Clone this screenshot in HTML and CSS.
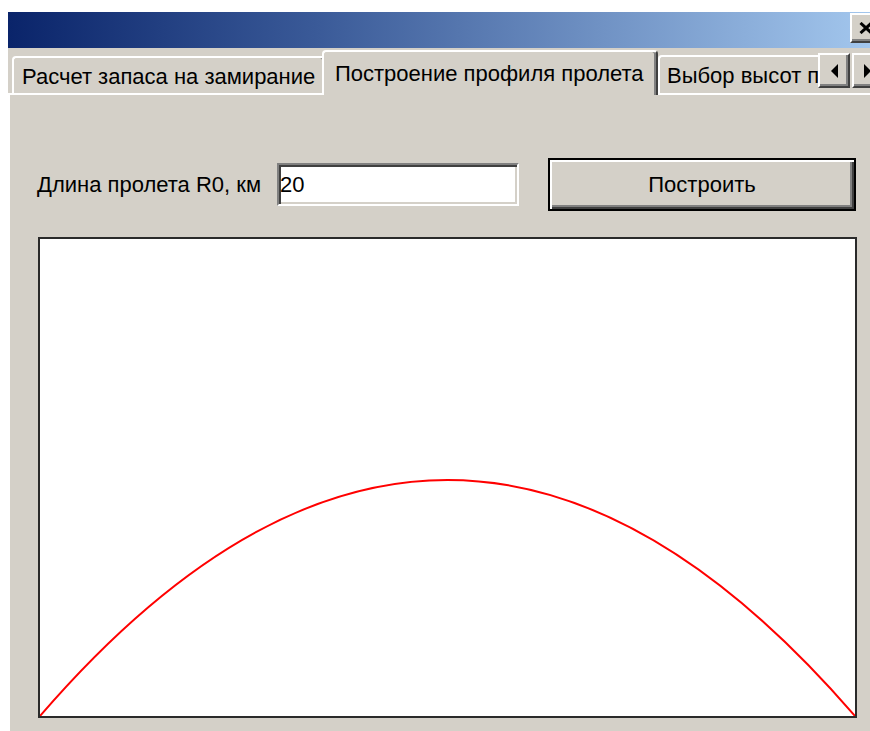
FILE: index.html
```html
<!DOCTYPE html>
<html lang="ru">
<head>
<meta charset="utf-8">
<title>Профиль пролета</title>
<link rel="stylesheet" href="styles.css">
</head>
<body>
<div class="window">
  <div class="titlebar">
    <button class="close-btn" type="button" aria-label="Закрыть">
      <svg width="14" height="12" viewBox="0 0 14 12"><path d="M1.5 1 L12.5 11 M12.5 1 L1.5 11" stroke="#000" stroke-width="3" fill="none"/></svg>
    </button>
  </div>
  <div class="tabstrip">
    <div class="tab tab-first">Расчет запаса на замирание</div>
    <div class="tab tab-active">Построение профиля пролета</div>
    <div class="tab tab-clipped">Выбор высот п</div>
    <div class="scroll-btns">
      <button class="scroll-btn" type="button" aria-label="Назад">
        <svg width="8" height="14" viewBox="0 0 8 14"><path d="M8 0 L1 7 L8 14 Z" fill="#000"/></svg>
      </button>
      <button class="scroll-btn" type="button" aria-label="Вперед">
        <svg width="8" height="14" viewBox="0 0 8 14"><path d="M0 0 L7 7 L0 14 Z" fill="#000"/></svg>
      </button>
    </div>
  </div>
  <div class="panel">
    <div class="form-row">
      <label class="field-label" for="r0">Длина пролета R0, км</label>
      <input class="field-input" id="r0" type="text" value="20">
      <button class="push-btn" type="button">Построить</button>
    </div>
    <div class="plot">
      <svg class="plot-svg" width="815" height="477" viewBox="0 0 815 477">
        <path d="M0 477 Q407.5 5 815 477" stroke="#ff0000" stroke-width="2" fill="none"/>
      </svg>
    </div>
  </div>
</div>
</body>
</html>
```

FILE: styles.css
```css
html, body {
  margin: 0;
  padding: 0;
}

body {
  width: 870px;
  height: 731px;
  overflow: hidden;
  background: #ffffff;
  font-family: "Liberation Sans", Arial, sans-serif;
  font-size: 22px;
  color: #000;
}

.window {
  margin: 12px 0 0 8px;
  width: 880px;
  height: 719px;
  background: #d4d0c8;
  display: flex;
  flex-direction: column;
}

/* caption bar */
.titlebar {
  height: 36px;
  flex: 0 0 36px;
  background: linear-gradient(to right, #0a246a 0%, #3a5a98 35%, #a6caf0 100%);
  display: flex;
  align-items: flex-start;
  justify-content: flex-end;
  padding: 1px 6px 0 0;
  box-sizing: border-box;
}

.close-btn {
  width: 32px;
  height: 30px;
  padding: 0;
  margin: 0;
  background: #d4d0c8;
  border: 2px solid;
  border-color: #fff #404040 #404040 #fff;
  box-shadow: inset -2px -2px #808080;
  display: flex;
  align-items: center;
  justify-content: center;
  box-sizing: border-box;
}

/* tabs */
.tabstrip {
  height: 45px;
  flex: 0 0 45px;
  display: flex;
  align-items: flex-end;
  padding-left: 4px;
  box-sizing: border-box;
}

.tab {
  box-sizing: border-box;
  background: #d4d0c8;
  border-top: 2px solid #fff;
  border-left: 2px solid #fff;
  border-right: 2px solid #404040;
  box-shadow: inset -2px 0 #808080;
  border-radius: 4px 4px 0 0;
  display: flex;
  align-items: center;
  white-space: nowrap;
  padding-top: 2px;
}

.tab-first {
  width: 314px;
  height: 37px;
  padding-left: 8px;
}

.tab-active {
  position: relative;
  z-index: 1;
  width: 336px;
  height: 45px;
  margin-left: -4px;
  margin-bottom: -2px;
  padding-left: 11px;
  padding-bottom: 2px;
}

.tab-clipped {
  width: 160px;
  height: 38px;
  padding-left: 7px;
  overflow: hidden;
  border-right: 0;
  box-shadow: none;
  border-top-right-radius: 0;
}

.scroll-btns {
  align-self: flex-start;
  margin-top: 5px;
  display: flex;
  gap: 2px;
}

.scroll-btn {
  width: 32px;
  height: 35px;
  padding: 0;
  margin: 0;
  background: #d4d0c8;
  border: 2px solid;
  border-color: #fff #404040 #404040 #fff;
  box-shadow: inset -2px -2px #808080;
  box-sizing: border-box;
  display: flex;
  align-items: center;
  justify-content: center;
}

/* page body */
.panel {
  flex: 1;
  border-top: 2px solid #fff;
  border-left: 2px solid #fff;
  padding: 63px 0 0 0;
}

.form-row {
  display: grid;
  grid-template-columns: 240px 271px 308px;
  align-items: center;
  height: 53px;
  padding-left: 27px;
}

.field-label {
  white-space: nowrap;
  padding-top: 1px;
}

.field-input {
  box-sizing: border-box;
  width: 242px;
  height: 43px;
  margin: 0;
  padding: 0 0 0 1px;
  font: inherit;
  color: #000;
  background: #fff;
  border: 2px solid;
  border-color: #808080 #fff #fff #808080;
  box-shadow: inset 2px 2px #404040, inset -2px -2px #d4d0c8;
  outline: none;
}

.push-btn {
  box-sizing: border-box;
  width: 308px;
  height: 53px;
  margin: 0;
  padding: 0;
  font: inherit;
  color: #000;
  background: #d4d0c8;
  border: 2px solid #000;
  box-shadow: inset 2px 2px #fff, inset -2px -2px #404040, inset -4px -4px #808080;
}

.plot {
  box-sizing: border-box;
  width: 819px;
  height: 481px;
  margin: 26px 0 0 28px;
  background: #fff;
  border: 2px solid #2a2a2a;
}

.plot-svg {
  display: block;
}
```
